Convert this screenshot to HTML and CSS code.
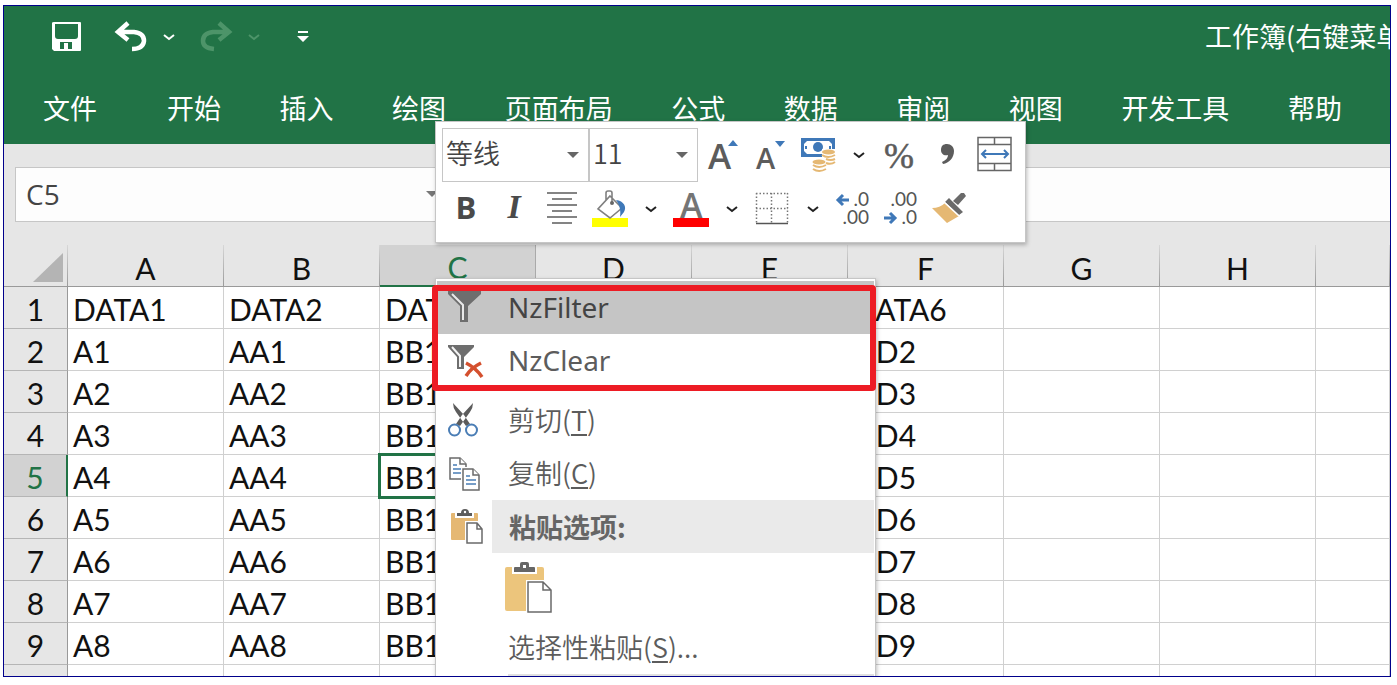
FILE: index.html
```html
<!DOCTYPE html>
<html lang="zh-CN">
<head>
<meta charset="utf-8">
<title>工作簿</title>
<link rel="stylesheet" href="styles.css">
</head>
<body>
<div class="window">
  <header class="ribbon">
    <div class="titlebar">
      <button class="qa qa-save" aria-label="保存"><svg width="30" height="30" viewBox="0 0 30 30"><path fill="#fff" fill-rule="evenodd" d="M2 0H28Q29 0 29 1V28Q29 29 28 29H2L0 27V1Q0 0 2 0zM3 2V14Q3 17 6 17H23Q26 17 26 14V2zM8 20V27H12V21H16V27H20V20z"/></svg></button>
      <button class="qa qa-undo" aria-label="撤消"><svg width="34" height="32" viewBox="0 0 34 32"><path d="M14 2L4 11L14 19M5 11H20Q30 12 30 20Q29 28 18 28" fill="none" stroke="#fff" stroke-width="4.5"/></svg></button>
      <button class="qa qa-more" aria-label="撤消选项"><svg width="12" height="8" viewBox="0 0 12 8"><path d="M1 2L6 6L11 2" fill="none" stroke="#fff" stroke-width="2"/></svg></button>
      <button class="qa qa-redo" aria-label="恢复"><svg width="34" height="32" viewBox="0 0 34 32"><path d="M20 2L30 11L20 19M29 11H14Q4 12 4 20Q4 27 15 28" fill="none" stroke="#4d9469" stroke-width="4.5"/></svg></button>
      <button class="qa qa-more" aria-label="恢复选项"><svg width="12" height="8" viewBox="0 0 12 8"><path d="M1 2L6 6L11 2" fill="none" stroke="#4d9469" stroke-width="2"/></svg></button>
      <button class="qa qa-custom" aria-label="自定义快速访问工具栏"><svg width="12" height="12" viewBox="0 0 12 12"><path fill="#fff" d="M1 0H11V2H1zM0 5H12L6 11z"/></svg></button>
      <div class="doc-title">工作簿(右键菜单</div>
    </div>
    <nav class="tabs">
      <a class="file" href="#">文件</a>
      <div class="tab-list">
        <a href="#">开始</a><a href="#">插入</a><a href="#">绘图</a><a href="#">页面布局</a><a href="#">公式</a><a href="#">数据</a><a href="#">审阅</a><a href="#">视图</a><a href="#">开发工具</a><a href="#">帮助</a>
      </div>
    </nav>
  </header>

  <div class="formula-bar">
    <div class="name-box">
      <input type="text" value="C5" aria-label="名称框">
      <svg width="12" height="6" viewBox="0 0 12 6"><path d="M0 0H12L6 6z" fill="#777"/></svg>
    </div>
    <input class="formula" type="text" aria-label="编辑栏">
  </div>

  <table class="sheet">
    <colgroup><col class="c-num"><col class="c"><col class="c"><col class="c"><col class="c"><col class="c"><col class="c"><col class="c"><col class="c"><col></colgroup>
    <thead>
      <tr><th class="corner"><svg width="30" height="29" viewBox="0 0 30 29"><path d="M30 0V29H0z" fill="#b4b4b4"/></svg></th><th>A</th><th>B</th><th class="on">C</th><th>D</th><th>E</th><th>F</th><th>G</th><th>H</th><th></th></tr>
    </thead>
    <tbody>
      <tr><th>1</th><td>DATA1</td><td>DATA2</td><td>DATA3</td><td></td><td></td><td>DATA6</td><td></td><td></td><td></td></tr>
      <tr><th>2</th><td>A1</td><td>AA1</td><td>BB1</td><td></td><td></td><td>DD2</td><td></td><td></td><td></td></tr>
      <tr><th>3</th><td>A2</td><td>AA2</td><td>BB1</td><td></td><td></td><td>DD3</td><td></td><td></td><td></td></tr>
      <tr><th>4</th><td>A3</td><td>AA3</td><td>BB1</td><td></td><td></td><td>DD4</td><td></td><td></td><td></td></tr>
      <tr><th class="on">5</th><td>A4</td><td>AA4</td><td class="active">BB1</td><td></td><td></td><td>DD5</td><td></td><td></td><td></td></tr>
      <tr><th>6</th><td>A5</td><td>AA5</td><td>BB1</td><td></td><td></td><td>DD6</td><td></td><td></td><td></td></tr>
      <tr><th>7</th><td>A6</td><td>AA6</td><td>BB1</td><td></td><td></td><td>DD7</td><td></td><td></td><td></td></tr>
      <tr><th>8</th><td>A7</td><td>AA7</td><td>BB1</td><td></td><td></td><td>DD8</td><td></td><td></td><td></td></tr>
      <tr><th>9</th><td>A8</td><td>AA8</td><td>BB1</td><td></td><td></td><td>DD9</td><td></td><td></td><td></td></tr>
      <tr><th></th><td></td><td></td><td></td><td></td><td></td><td></td><td></td><td></td><td></td></tr>
    </tbody>
  </table>

  <div class="mini" role="toolbar" aria-label="浮动工具栏">
    <div class="mini-row">
      <div class="combo font"><select aria-label="字体"><option>等线</option></select><svg width="12" height="6" viewBox="0 0 12 6"><path d="M0 0H12L6 6z" fill="#666"/></svg></div>
      <div class="combo size"><select aria-label="字号"><option>11</option></select><svg width="12" height="6" viewBox="0 0 12 6"><path d="M0 0H12L6 6z" fill="#666"/></svg></div>
      <button class="tool" aria-label="增大字号"><svg width="48" height="54" viewBox="0 0 48 54"><text class="glyph" x="10" y="41" font-size="35">A</text><path d="M30 18L35 12L40 18z" fill="#3f78b8"/></svg></button>
      <button class="tool" aria-label="减小字号"><svg width="48" height="54" viewBox="0 0 48 54"><text class="glyph" x="10" y="41" font-size="29">A</text><path d="M29 13H39L34 19z" fill="#3f78b8"/></svg></button>
      <button class="tool" aria-label="会计数字格式"><svg width="48" height="54" viewBox="0 0 48 54"><path d="M7 10H41V29H7z" fill="#3f78b8"/><path d="M13 13H35L38 16V23L35 26H13L10 23V16z" fill="#fff"/><circle cx="24" cy="19" r="5" fill="#3f78b8"/><path d="M12 18v3M36 18v3" stroke="#3f78b8" stroke-width="2"/><path d="M28 21H42V37H34V43H19V31H28z" fill="#fff"/><g fill="#e5b873"><ellipse cx="34.500" cy="24" rx="6.500" ry="2.500"/><ellipse cx="25" cy="34" rx="6.500" ry="2.500"/></g><path d="M28 27Q34 31 41 27M32 31Q37 33 41 31M32 35Q37 37 41 34M19 37Q25 41 32 37M19 41Q25 45 32 41" fill="none" stroke="#e5b873" stroke-width="2"/></svg></button>
      <button class="drop" aria-label="会计格式选项"><svg width="12" height="8" viewBox="0 0 12 8"><path d="M1 2L6 6L11 2" fill="none" stroke="#222" stroke-width="2"/></svg></button>
      <button class="tool" aria-label="百分比样式"><svg width="48" height="54" viewBox="0 0 48 54"><text class="percent" x="9" y="40">%</text></svg></button>
      <button class="tool" aria-label="千位分隔样式"><svg width="48" height="54" viewBox="0 0 48 54"><path d="M24 16C28 16 31 19 31 23C31 30 26 35 20 36L19 34C23 32 25 30 25 27C21 28 18 26 18 22C18 18 20 16 24 16z" fill="#5c5c5c"/></svg></button>
      <button class="tool" aria-label="合并后居中"><svg width="48" height="54" viewBox="0 0 48 54"><path d="M7 9.500H40V42.500H7zM7 16.500H40M7 35.500H40M23.500 9.500V16.500M23.500 35.500V42.500" fill="none" stroke="#666" stroke-width="1.500"/><path d="M11 26H37M15 22L11 26L15 30M33 22L37 26L33 30" fill="none" stroke="#3f78b8" stroke-width="2"/></svg></button>
    </div>
    <div class="mini-row">
      <button class="tool bold">B</button>
      <button class="tool italic">I</button>
      <button class="tool" aria-label="居中"><svg width="48" height="54" viewBox="0 0 48 54"><path d="M9 11H39M14 17H34M9 23H39M14 29H34M9 35H39M14 41H34" stroke="#5c5c5c" stroke-width="1.600"/></svg></button>
      <button class="tool" aria-label="填充颜色"><svg width="48" height="54" viewBox="0 0 48 54"><path d="M6 36H42V45H6z" fill="#ff0"/><path d="M24 14L36 26L24 36L12 27zM20 18V11Q20 9 22 9H24Q26 9 26 11V20" fill="none" stroke="#808080" stroke-width="1.600"/><circle cx="26" cy="21" r="2" fill="#666"/><path d="M30 18C38 19 41 25 38 30L34 35C35 30 34 23 30 18z" fill="#3f78b8"/></svg></button>
      <button class="drop" aria-label="填充颜色选项"><svg width="12" height="8" viewBox="0 0 12 8"><path d="M1 2L6 6L11 2" fill="none" stroke="#222" stroke-width="2"/></svg></button>
      <button class="tool" aria-label="字体颜色"><svg width="48" height="54" viewBox="0 0 48 54"><text class="glyph light" x="13" y="36" font-size="34">A</text><path d="M6 36H42V45H6z" fill="#f00"/></svg></button>
      <button class="drop" aria-label="字体颜色选项"><svg width="12" height="8" viewBox="0 0 12 8"><path d="M1 2L6 6L11 2" fill="none" stroke="#222" stroke-width="2"/></svg></button>
      <button class="tool" aria-label="边框"><svg width="48" height="54" viewBox="0 0 48 54"><path d="M8 11.500H40M8 26.500H40M8.500 11V41M23.500 11V41M39.500 11V41" stroke="#777" stroke-width="1.500" stroke-dasharray="1.500 2"/><path d="M8 41.500H40" stroke="#555" stroke-width="1.500"/></svg></button>
      <button class="drop" aria-label="边框选项"><svg width="12" height="8" viewBox="0 0 12 8"><path d="M1 2L6 6L11 2" fill="none" stroke="#222" stroke-width="2"/></svg></button>
      <button class="tool" aria-label="增加小数位数"><svg width="48" height="54" viewBox="0 0 48 54"><text class="dec" x="40" y="24">.0</text><text class="dec" x="40" y="42">.00</text><path d="M20 18H9M14 13L9 18L14 23" fill="none" stroke="#3f78b8" stroke-width="3"/></svg></button>
      <button class="tool" aria-label="减少小数位数"><svg width="48" height="54" viewBox="0 0 48 54"><text class="dec" x="40" y="24">.00</text><text class="dec" x="40" y="42">.0</text><path d="M7 36H18M13 31L18 36L13 41" fill="none" stroke="#3f78b8" stroke-width="3"/></svg></button>
      <button class="tool" aria-label="格式刷"><svg width="48" height="54" viewBox="0 0 48 54"><path d="M7 26Q15 26 20 21L34 34L22 41z" fill="#e5b873"/><path d="M20 20L24 16L38 30L34 33zM28 19L36 11L39 11L41 14L33 23z" fill="#6a6a6a"/><path d="M19 20L34 34" stroke="#fff" stroke-width="1.500"/></svg></button>
    </div>
  </div>

  <div class="menu" role="menu">
    <button class="item latin hover" role="menuitem"><svg width="36" height="36" viewBox="0 0 36 36"><path d="M0 2H33V5L20 17V33H12V17L0 5z" fill="#6e6e6e"/><path d="M4 5L15 16V31" fill="none" stroke="#e8e8e8" stroke-width="2"/></svg>NzFilter</button>
    <button class="item latin" role="menuitem"><svg width="36" height="36" viewBox="0 0 36 36"><path d="M0 3H26V5L16 15V27H9V15L0 5z" fill="#6e6e6e"/><path d="M4 5L12 14V25" fill="none" stroke="#f4f4f4" stroke-width="2"/><path d="M18 21Q28 26 34 35M33 21Q23 26 18 34" fill="none" stroke="#d4502e" stroke-width="3.500"/></svg>NzClear</button>
    <div class="gap"></div>
    <button class="item" role="menuitem"><svg width="36" height="36" viewBox="0 0 36 36"><path d="M5 1Q5 6 8 10L18 24L22 22L16 13zM25 1Q25 6 22 10L12 24L8 22L14 13z" fill="#5c5c5c"/><g fill="none" stroke="#4a7db5" stroke-width="2"><circle cx="6.500" cy="28" r="5.500"/><circle cx="23.500" cy="28" r="5.500"/></g></svg><span>剪切(<u>T</u>)</span></button>
    <button class="item" role="menuitem"><svg width="36" height="36" viewBox="0 0 36 36"><g fill="#fff" stroke="#6a6a6a" stroke-width="1.500"><path d="M2 3H12L18 9V24H2z"/><path d="M12 3V9H18"/></g><path d="M5 10H9M5 14H13M5 18H13" stroke="#4a7db5" stroke-width="1.500"/><path d="M13 12H27L33 18V36H13z" fill="#fff"/><g fill="#fff" stroke="#6a6a6a" stroke-width="1.500"><path d="M15 14H25L31 20V35H15z"/><path d="M25 14V20H31"/></g><path d="M18 21H22M18 25H28M18 29H28" stroke="#4a7db5" stroke-width="1.500"/></svg><span>复制(<u>C</u>)</span></button>
    <div class="section"><svg width="36" height="36" viewBox="0 0 36 36"><rect x="3" y="4" width="27" height="27" rx="1" fill="#e5b873"/><path d="M7 2H26V9H7zM17 12H36V36H17z" fill="#fff"/><path d="M9 7V4H13Q13 0 17 0T21 4H24V7z" fill="#5c5c5c"/><circle cx="17" cy="3" r="1.200" fill="#fff"/><path d="M19 14H29L34 20V34H19zM29 14V20H34" fill="#fff" stroke="#6a6a6a" stroke-width="1.500"/></svg><h2>粘贴选项:</h2></div>
    <div class="paste"><button aria-label="粘贴"><svg width="48" height="52" viewBox="0 0 48 52"><rect x="0" y="5" width="39" height="44" rx="2" fill="#ecc57c"/><path d="M7 3H32V12H7zM21 18H48V52H21z" fill="#fff"/><path d="M9 10V6Q9 5 10 5H15V2Q15 0 17 0H22Q24 0 24 2V5H29Q30 5 30 6V10z" fill="#666"/><rect x="18" y="3" width="3" height="3" fill="#fff"/><path d="M23 20H38L46 28V50H23zM38 20V28H46" fill="#fff" stroke="#6a6a6a" stroke-width="1.500"/></svg></button></div>
    <button class="item plain" role="menuitem"><span>选择性粘贴(<u>S</u>)...</span></button>
    <hr>
    <div class="mark"></div>
  </div>
</div>
</body>
</html>
```
FILE: styles.css
```css
* { box-sizing: border-box; }

body {
  margin: 0;
  height: 100vh;
  padding: 5px 6px 8px 3px;
  background: #fff;
  font-family: "Open Sans", "Noto Sans CJK SC", sans-serif;
  color: #555;
}

button { padding: 0; border: 0; background: none; color: inherit; font: inherit; }
svg { display: block; flex: none; }

.window {
  position: relative;
  height: 100%;
  overflow: hidden;
  border: 1px solid #00008b;
  background: #e6e6e6;
}

.ribbon {
  background: #217346;
  color: #fff;
  font-family: "Noto Sans CJK SC", sans-serif;
  font-size: 27px;
}
.titlebar { display: flex; align-items: center; height: 62px; padding-left: 48px; }
.qa-undo { margin-left: 32px; }
.qa-more { margin-left: 15px; }
.qa-redo { margin-left: 24px; }
.qa-custom { margin-left: 37px; }
.doc-title {
  width: 185px;
  margin-left: auto;
  padding-bottom: 4px;
  overflow: hidden;
  white-space: nowrap;
}
.tabs { display: flex; align-items: center; height: 76px; padding: 2px 48px 0 39px; }
.tabs a { color: #fff; text-decoration: none; white-space: nowrap; }
.file { margin-right: 70px; }
.tab-list { display: flex; flex: 1; justify-content: space-between; }

.formula-bar { display: flex; gap: 12px; padding: 23px 0 23px 11px; }
.name-box {
  display: flex;
  align-items: center;
  width: 436px;
  height: 55px;
  padding: 0 12px 2px 10px;
  border: 1px solid #c6c6c6;
  background: #fdfdfd;
}
.name-box input {
  flex: 1;
  min-width: 0;
  padding: 0;
  border: 0;
  background: none;
  color: #444;
  font: 28px "Open Sans", sans-serif;
}
.formula { flex: 1; min-width: 0; border: 1px solid #c6c6c6; border-right: 0; background: #fdfdfd; }

.sheet {
  width: 100%;
  table-layout: fixed;
  border-collapse: separate;
  border-spacing: 0;
  background: #fff;
  color: #111;
  font-family: Lato, sans-serif;
  font-size: 30px;
  line-height: 38px;
}
.c-num { width: 64px; }
.c { width: 156px; }
.sheet td, .sheet th { height: 42px; padding: 3px 0 0; font-weight: 400; }
.sheet td {
  padding-left: 5px;
  border-right: 1px solid #d0d0d0;
  border-bottom: 1px solid #d0d0d0;
}
.sheet th { border-bottom: 1px solid #b5b5b5; border-right: 1px solid #999; background: #e6e6e6; }
.sheet thead th {
  height: 41px;
  padding-top: 4px;
  line-height: 36px;
  border-bottom-color: #999;
  border-right: 1px solid;
  border-image: linear-gradient(#d8d8d8, #999) 1;
}
.sheet .corner svg { margin: 0 4px 0 auto; }
.sheet thead .on { border-image: none; border-right-color: #aaa; border-bottom: 2px solid #217346; background: #d2d2d2; color: #217346; }
.sheet tbody .on { border-right: 2px solid #217346; background: #d2d2d2; color: #217346; }
.active { outline: 3px solid #217346; outline-offset: -1px; }

.mini {
  position: absolute;
  left: 431px;
  top: 115px;
  padding: 6px;
  border: 1px solid #c6c6c6;
  background: #fff;
  box-shadow: 1px 2px 4px rgba(0, 0, 0, .25);
}
.mini-row { display: flex; height: 54px; }
.combo {
  display: flex;
  align-items: center;
  padding-right: 9px;
  border: 1px solid #c6c6c6;
}
.combo.font { width: 147px; }
.combo.size { width: 109px; }
.combo select {
  flex: 1;
  min-width: 0;
  height: 100%;
  padding: 0 0 6px 3px;
  border: 0;
  appearance: none;
  background: none;
  color: #444;
  font: 350 27px "Noto Sans CJK SC", sans-serif;
}
.tool { width: 48px; }
.drop { display: flex; align-items: center; justify-content: center; width: 33px; }
.bold, .italic { padding-bottom: 4px; }
.bold { font-size: 31px; font-weight: 700; color: #4a4a4a; }
.italic { font: italic bold 34px "Liberation Serif", serif; color: #4a4a4a; }
.glyph { font-family: "Open Sans", sans-serif; font-weight: 600; fill: #5c5c5c; }
.light { fill: #757575; }
.percent { font: 36px "Liberation Serif", serif; fill: #5c5c5c; stroke: #5c5c5c; stroke-width: .5; }
.dec { font: 19px Lato, sans-serif; text-anchor: end; fill: #555; }

.menu {
  position: absolute;
  left: 431px;
  top: 272px;
  width: 441px;
  padding: 2px 1px;
  border: 1px solid #c6c6c6;
  background: #fff;
  box-shadow: 1px 2px 4px rgba(0, 0, 0, .25);
  font-size: 27px;
  color: #5c5c5c;
}
.item { display: flex; align-items: center; gap: 24px; width: 100%; height: 53px; padding: 0 0 2px 11px; }
.item, .section h2 { font-family: "Noto Sans CJK SC", sans-serif; }
.item { font-weight: 350; }
.latin { font-family: "Noto Sans", sans-serif; font-size: 28px; font-weight: 400; }
.hover { background: #c5c5c5; color: #444; }
.plain { padding-left: 71px; }
.item u { text-decoration-thickness: 2px; text-underline-offset: 3px; }
.gap { height: 7px; }
.section { display: flex; align-items: center; height: 53px; padding-left: 11px; gap: 8px; }
.section h2 {
  flex: 1;
  margin: 0;
  padding-left: 17px;
  background: #eaeaea;
  color: #666;
  font-size: 27px;
  font-weight: 700;
  line-height: 53px;
}
.paste { height: 68px; padding: 9px 0 0 68px; }
.menu hr { height: 2px; margin: 0 0 20px 71px; border: 0; background: #e0e0e0; }
.mark {
  position: absolute;
  left: -4px;
  right: -1px;
  top: 6px;
  height: 106px;
  border: 6px solid #ed1c24;
  border-radius: 4px;
}
```
